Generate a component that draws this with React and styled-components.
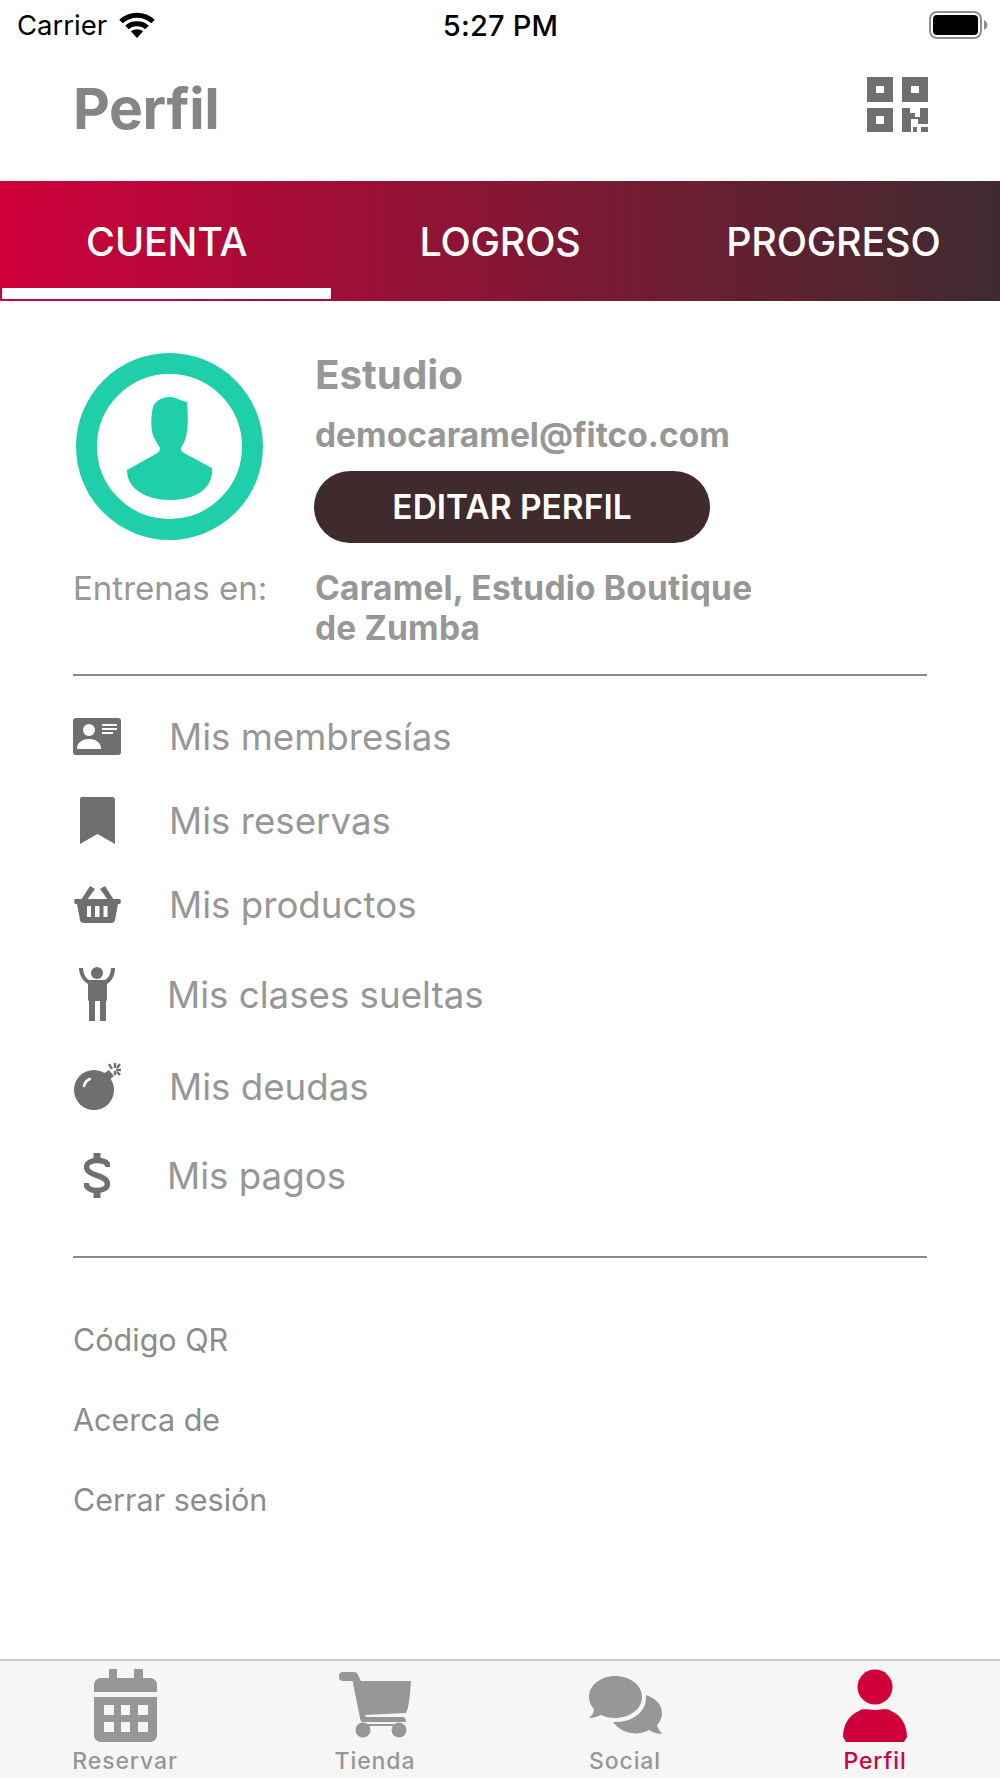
import React from "react";
import styled, { createGlobalStyle } from "styled-components";

const Global = createGlobalStyle`
  html, body { margin: 0; padding: 0; background: #fff; }
  * { box-sizing: border-box; }
`;
const font = `Inter, "Noto Sans", sans-serif`;

const Page = styled.div`
  width: 1000px; height: 1778px; display: flex; flex-direction: column;
  background: #fff; font-family: ${font}; overflow: hidden;
`;
const StatusBar = styled.div`
  height: 50px; flex: none; display: grid; grid-template-columns: 1fr auto 1fr; align-items: center;
  padding: 0 12px 0 17px; color: #000; font-size: 27.5px;
`;
const StatusLeft = styled.div`display: flex; align-items: center; gap: 12px;`;
const StatusTime = styled.div`font-weight: 500; font-size: 29px; margin-right: 4px; letter-spacing: 0.2px;`;
const StatusRight = styled.div`display: flex; justify-content: flex-end;`;
const Header = styled.header`
  height: 131px; flex: none; display: flex; align-items: center; justify-content: space-between;
  padding: 0 72px 15px 73px;
`;
const Title = styled.h1`margin: 0; font-size: 57px; font-weight: 700; color: #858585; letter-spacing: -0.4px;`;
const QRWrap = styled.div`margin-bottom: 8px; filter: blur(0.6px); display: flex;`;
const TabBar = styled.nav`
  height: 120px; flex: none; display: grid; grid-template-columns: repeat(3, 1fr);
  background: linear-gradient(90deg, #d0003a 0%, #3e2b2f 100%);
`;
const Tab = styled.div`
  position: relative; display: flex; align-items: center; justify-content: center; padding-top: 2px;
  color: #fff; font-size: 39.5px; font-weight: 500; letter-spacing: -0.2px;
  ${p => p.$active && `&::after { content: ""; position: absolute; left: 2px; right: 2px; bottom: 2px; height: 11px; background: #fff; border-radius: 1px; }`}
`;
const Main = styled.main`padding: 52px 73px 0 73px; flex: 1;`;
const Profile = styled.section`
  display: grid; grid-template-columns: 241px 1fr; align-items: start;
`;
const AvatarCell = styled.div`padding: 0 0 0 3px;`;
const Info = styled.div`display: flex; flex-direction: column;`;
const Name = styled.div`font-size: 40.3px; line-height: 44px; font-weight: 700; color: #979797; margin-left: 1px;`;
const Email = styled.div`font-size: 33.5px; line-height: 40px; font-weight: 700; color: #979797; margin-top: 18px; margin-left: 1px;`;
const EditButton = styled.button`
  width: 396px; height: 72px; margin: 16px 0 0 0; border: 0; border-radius: 36px; padding: 0;
  background: #3f2a2e; color: #fff; font-family: ${font}; font-size: 33.5px; font-weight: 600;
`;
const TrainLabel = styled.div`font-size: 33px; line-height: 40px; color: #979797; margin-top: 25px;`;
const TrainValue = styled.div`font-size: 33.5px; line-height: 40px; font-weight: 700; color: #979797; margin: 25px 0 0 1px; max-width: 450px; letter-spacing: 0.2px;`;
const Divider = styled.hr`margin: ${p => p.$top}px 0 0 0; border: 0; height: 2px; background: #8a8a8a;`;
const Menu = styled.div`margin-top: 18px;`;
const MenuRow = styled.div`
  height: ${p => p.$h}px; display: flex; align-items: center; color: #979797; font-size: 36.7px;
`;
const MenuIcon = styled.div`
  width: 48px; flex: none; display: flex; justify-content: center; align-items: center; filter: blur(0.4px);
`;
const MenuLabel = styled.span`margin-left: ${p => p.$gap}px;`;
const Links = styled.div`margin-top: 41px;`;
const LinkRow = styled.div`height: 80px; display: flex; align-items: center; color: #8c8c8c; font-size: 30.5px;`;
const BottomBar = styled.footer`
  height: 119px; flex: none; display: grid; grid-template-columns: repeat(4, 1fr);
  background: #f6f6f6; border-top: 2px solid #c9c9c9;
`;
const BottomItem = styled.div`
  position: relative; display: flex; flex-direction: column; align-items: center;
  color: ${p => (p.$active ? "#d0003a" : "#979797")};
`;
const BottomIcon = styled.div`height: 88px; display: flex; align-items: center; justify-content: center; filter: blur(0.5px);`;
const BottomLabel = styled.div`font-size: 23px; font-weight: 500; letter-spacing: 0.9px; line-height: 24px;`;

const G = "#6f6f6f";

const Wifi = () => (
  <svg width="36" height="27" viewBox="0 0 36 27" fill="none" stroke="#000" strokeWidth="5">
    <path d="M2 9.500C11 1 25 1 34 9.500" />
    <path d="M8 15.500C13 10.500 23 10.500 28 15.500" />
    <path d="M18 26L12 19.500C15 16.500 21 16.500 24 19.500Z" fill="#000" stroke="none" />
  </svg>
);
const Battery = () => (
  <svg width="59" height="28" viewBox="0 0 59 28">
    <rect x="1" y="1" width="51" height="26" rx="7" fill="none" stroke="#8e8e8e" strokeWidth="2" />
    <rect x="4" y="4" width="45" height="20" rx="4" fill="#000" />
    <path d="M55 9c2 1 3.500 3 3.500 5s-1.500 4-3.500 5z" fill="#8e8e8e" />
  </svg>
);
const QR = () => (
  <svg width="61" height="55" viewBox="0 0 61 55" fill={G}>
    <path fillRule="evenodd" d="M0 0H26V25H0ZM9 9V16H17V9Z" />
    <path fillRule="evenodd" d="M35 0H61V25H35ZM44 9V16H52V9Z" />
    <path fillRule="evenodd" d="M0 31H26V55H0ZM9 39V47H17V39Z" />
    <path d="M35 31H43V36H48V40H53V31H61V47H51V42H44V55H35Z" />
    <rect x="46" y="50" width="4" height="5" />
    <rect x="54" y="50" width="7" height="5" />
  </svg>
);
const Avatar = () => (
  <svg width="187" height="187" viewBox="0 0 187 187" style={{ display: "block" }}>
    <circle cx="93.500" cy="93.500" r="83" fill="none" stroke="#1fcfa9" strokeWidth="21" />
    <path fill="#1fcfa9" d="M94 44C100 44 105 48 111 49C111 55 113 65 111 78C110 86 108 90 106 93C104 96 105 98 108 100L136 115C137 124 133 133 125 139C116 145 105 147 94 147C82 147 70 144 62 138C55 133 51 126 51 117L78 102C82 100 84 98 84 95C81 90 78 86 76 79C75 72 75 62 77 54C79 48 86 44 94 44Z" />
  </svg>
);
const CardIcon = () => (
  <svg width="48" height="37" viewBox="0 0 48 37">
    <rect width="48" height="37" rx="3" fill={G} />
    <circle cx="16" cy="12" r="6" fill="#fff" />
    <path d="M4 31C4 24 10 21 16 21C22 21 28 24 28 31Z" fill="#fff" />
    <rect x="29" y="6" width="15" height="2" fill="#fff" />
    <rect x="29" y="10" width="15" height="2" fill="#fff" />
    <rect x="29" y="14" width="11" height="2" fill="#fff" />
  </svg>
);
const BookmarkIcon = () => (
  <svg width="37" height="47" viewBox="0 0 37 47">
    <path fill={G} d="M3 0H33C35 0 36 1 36 3V47L18.500 37L1 47V3C1 1 1.500 0 3 0Z" />
  </svg>
);
const BasketIcon = () => (
  <svg width="47" height="37" viewBox="0 0 47 37" fill={G}>
    <path d="M1 13H46C47 13 47 18 46 18H44L41 34C41 36 39 37 37 37H10C8 37 6 36 6 34L3 18H1C0 18 0 13 1 13Z" />
    <path d="M16 0L21 3L13 14H7Z" />
    <path d="M31 0L26 3L34 14H40Z" />
    <rect x="13" y="20" width="4" height="11" fill="#fff" />
    <rect x="21" y="20" width="4.500" height="11" fill="#fff" />
    <rect x="29.500" y="20" width="4" height="11" fill="#fff" />
  </svg>
);
const PersonIcon = () => (
  <svg width="36" height="54" viewBox="0 0 36 54" fill={G}>
    <circle cx="18" cy="6" r="6" />
    <path d="M0 1L4 1C4 5 6 11 10 13H26C30 11 32 5 32 1L36 1C36 8 33 14 28 17V33L27 34V54H21V34H16V54H10V34L9 33V17C4 14 0 8 0 1Z" />
  </svg>
);
const BombIcon = () => (
  <svg width="47" height="47" viewBox="0 0 47 47">
    <circle cx="20" cy="27" r="20" fill={G} />
    <path d="M29 11L35 7L40 13L35 17Z" fill={G} />
    <path d="M10 23C11 19 13 17 16 16" fill="none" stroke="#fff" strokeWidth="2.500" strokeLinecap="round" />
    <g stroke={G} strokeWidth="2.400">
      <path d="M35 1L38 6" /><path d="M41 0V5" /><path d="M46 1L43 5" /><path d="M47 7H42" /><path d="M46 12L43 9" /><path d="M41 12V8" />
    </g>
  </svg>
);
const DollarIcon = () => (
  <svg width="26" height="45" viewBox="0 0 26 45" fill="none" stroke={G}>
    <path strokeWidth="5.500" d="M24 14C24 9 19 7.500 13 7.500C7 7.500 2.500 10 2.500 14C2.500 19 8 21 13 22.500C18 24 23.500 26 23.500 31C23.500 35 19 37.500 13 37.500C7 37.500 2 35 2 30" />
    <path strokeWidth="7" d="M13 0V7" />
    <path strokeWidth="7" d="M13 38V45" />
  </svg>
);
const CalendarIcon = () => (
  <svg width="63" height="73" viewBox="0 0 63 73" fill="currentColor">
    <rect x="15" y="0" width="8" height="14" />
    <rect x="40" y="0" width="9" height="14" />
    <path d="M7 9H56C60 9 63 12 63 16V23H0V16C0 12 3 9 7 9Z" />
    <path fillRule="evenodd" d="M0 28H63V66C63 70 60 73 56 73H7C3 73 0 70 0 66ZM10 36V46H20V36ZM27 36V46H36V36ZM44 36V46H54V36ZM10 53V63H20V53ZM27 53V63H36V53ZM44 53V63H54V53Z" />
  </svg>
);
const CartIcon = () => (
  <svg width="72" height="66" viewBox="0 0 72 66" fill="currentColor">
    <rect x="0" y="0" width="19" height="9" rx="4" />
    <path d="M13 3H19L22 9H72L71 22C70 30 69 38 67 41L26 43L27 45H63C66 45 67 47 67 50H24C22 50 21 48 21 46L13 6Z" />
    <circle cx="24" cy="58" r="7.500" />
    <circle cx="60" cy="58" r="7.500" />
    <rect x="24" y="52" width="36" height="2" />
  </svg>
);
const SocialIcon = () => (
  <svg width="73" height="58" viewBox="0 0 73 58" fill="currentColor">
    <path d="M57 19C66 22 73 28 73 37C73 43 70 47 68 49C69 53 71 55 73 58C68 58 63 56 60 54C55 57 48 58 42 57C36 56 29 53 24 46C38 47 50 41 55 31C57 27 57 23 57 19Z" />
    <path d="M26 0C41 0 53 9 53 21C53 33 41 42 26 42C21 42 16 41 12 39C8 41 4 42 0 42C3 39 5 37 5 33C2 30 0 26 0 21C0 9 12 0 26 0Z" />
  </svg>
);
const ProfileIcon = () => (
  <svg width="64" height="73" viewBox="0 0 64 73" fill="currentColor">
    <circle cx="32" cy="18" r="17.500" />
    <path d="M16 42C20 39 25 41 32 41C39 41 44 39 48 42C58 46 64 56 64 68L61 73H3L0 68C0 56 6 46 16 42Z" />
  </svg>
);

const menu = [
  { label: "Mis membresías", h: 84, gap: 48, icon: <CardIcon /> },
  { label: "Mis reservas", h: 84, gap: 48, icon: <BookmarkIcon /> },
  { label: "Mis productos", h: 84, gap: 48, icon: <BasketIcon /> },
  { label: "Mis clases sueltas", h: 96, gap: 46, icon: <PersonIcon /> },
  { label: "Mis deudas", h: 88, gap: 48, icon: <BombIcon /> },
  { label: "Mis pagos", h: 90, gap: 46, icon: <DollarIcon /> },
];
const tabs = [
  { label: "Reservar", icon: <CalendarIcon /> },
  { label: "Tienda", icon: <CartIcon /> },
  { label: "Social", icon: <SocialIcon /> },
  { label: "Perfil", icon: <ProfileIcon />, active: true },
];

export default function App() {
  return (
    <Page>
      <Global />
      <StatusBar>
        <StatusLeft>Carrier <Wifi /></StatusLeft>
        <StatusTime>5:27 PM</StatusTime>
        <StatusRight><Battery /></StatusRight>
      </StatusBar>
      <Header>
        <Title>Perfil</Title>
        <QRWrap><QR /></QRWrap>
      </Header>
      <TabBar>
        <Tab $active>CUENTA</Tab>
        <Tab>LOGROS</Tab>
        <Tab>PROGRESO</Tab>
      </TabBar>
      <Main>
        <Profile>
          <AvatarCell><Avatar /></AvatarCell>
          <Info>
            <Name>Estudio</Name>
            <Email>democaramel@fitco.com</Email>
            <EditButton>EDITAR PERFIL</EditButton>
          </Info>
          <TrainLabel>Entrenas en:</TrainLabel>
          <TrainValue>Caramel, Estudio Boutique de Zumba</TrainValue>
        </Profile>
        <Divider $top={26} />
        <Menu>
          {menu.map(m => (
            <MenuRow key={m.label} $h={m.h}>
              <MenuIcon>{m.icon}</MenuIcon>
              <MenuLabel $gap={m.gap}>{m.label}</MenuLabel>
            </MenuRow>
          ))}
        </Menu>
        <Divider $top={36} />
        <Links>
          <LinkRow>Código QR</LinkRow>
          <LinkRow>Acerca de</LinkRow>
          <LinkRow>Cerrar sesión</LinkRow>
        </Links>
      </Main>
      <BottomBar>
        {tabs.map(t => (
          <BottomItem key={t.label} $active={t.active}>
            <BottomIcon>{t.icon}</BottomIcon>
            <BottomLabel>{t.label}</BottomLabel>
          </BottomItem>
        ))}
      </BottomBar>
    </Page>
  );
}
